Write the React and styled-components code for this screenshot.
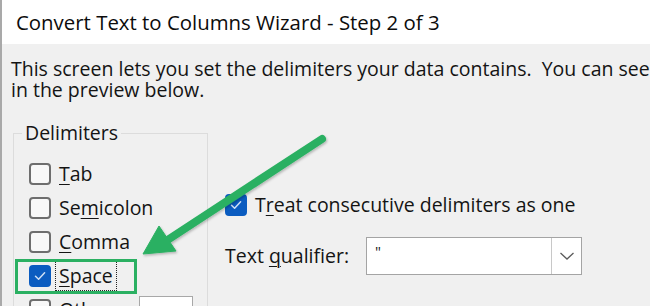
import React from 'react';
import styled, { createGlobalStyle } from 'styled-components';

const Global = createGlobalStyle`
  html, body { margin: 0; padding: 0; background: #f0f0f0; }
  body {
    font-family: "Open Sans", "Noto Sans", sans-serif;
    color: #141414;
  }
`;

const Window = styled.div`
  position: relative;
  width: 650px;
  height: 306px;
  overflow: hidden;
`;

const Dialog = styled.div`
  box-sizing: border-box;
  width: 650px;
  height: 306px;
  border-left: 2px solid #a9a9a9;
  background: #f0f0f0;
  display: flex;
  flex-direction: column;
`;

const TitleBar = styled.div`
  flex: none;
  height: 44px;
  background: #ffffff;
  display: flex;
  align-items: center;
  padding-left: 14px;
  font-size: 20.4px;
  color: #0c0c0c;
  white-space: nowrap;
`;

const Body = styled.div`
  padding: 14px 0 0 9px;
  display: flex;
  flex-direction: column;
`;

const Description = styled.p`
  margin: 0;
  font-size: 19.5px;
  line-height: 21px;
  white-space: nowrap;
`;

const Columns = styled.div`
  display: flex;
  align-items: flex-start;
  margin-top: 22px;
`;

const GroupBox = styled.fieldset`
  box-sizing: border-box;
  margin: 0 0 0 2px;
  width: 195px;
  height: 220px;
  border: 1px solid #dcdcdc;
  padding: 0 0 0 8px;
`;

const Legend = styled.legend`
  padding: 0 3px;
  font-size: 19.5px;
  line-height: 22px;
`;

const OptionList = styled.div`
  display: flex;
  flex-direction: column;
  padding: 13px 0 0 7px;
`;

const OptionRow = styled.div`
  display: flex;
  align-items: center;
  height: 34px;
  gap: 5px;
  flex: none;
`;

const Box = styled.span`
  box-sizing: border-box;
  flex: none;
  width: 22px;
  height: 22px;
  border-radius: 4px;
  border: ${p => (p.$checked ? '2px solid #0b5cc0' : '2px solid #6e6e6e')};
  background: ${p => (p.$checked ? '#0b5cc0' : '#f8f8f8')};
  display: flex;
  align-items: center;
  justify-content: center;
`;

const Label = styled.span`
  font-size: 19.5px;
  line-height: 28px;
  padding: 0 3px;
  white-space: nowrap;
  outline: ${p => (p.$focused ? '1px dotted #222' : 'none')};
`;

const Key = styled.span`
  text-decoration: underline;
  text-underline-offset: 3px;
  text-decoration-thickness: 1px;
`;

const SmallInput = styled.span`
  display: block;
  box-sizing: border-box;
  width: 54px;
  height: 28px;
  margin-left: 14px;
  background: #fff;
  border: 1px solid #a8a8a8;
  border-bottom-color: #8a8a8a;
`;

const RightPanel = styled.div`
  display: flex;
  flex-direction: column;
  padding: 66px 0 0 17px;
`;

const QualifierRow = styled.div`
  display: flex;
  align-items: center;
  gap: 17px;
  margin-top: 15px;
`;

const PlainLabel = styled.span`
  font-size: 19.5px;
  line-height: 26px;
  white-space: nowrap;
`;

const Combo = styled.div`
  box-sizing: border-box;
  width: 216px;
  height: 38px;
  background: #fff;
  border: 1px solid #a4a4a4;
  display: flex;
`;

const ComboValue = styled.span`
  flex: 1;
  padding: 6px 0 0 8px;
  font-size: 15px;
  line-height: 15px;
  color: #222;
`;

const ComboButton = styled.span`
  flex: none;
  width: 29px;
  border-left: 1px solid #c8c8c8;
  display: flex;
  align-items: center;
  justify-content: center;
`;

const Highlight = styled.div`
  position: absolute;
  left: 15px;
  top: 259px;
  width: 122px;
  height: 35px;
  box-sizing: border-box;
  border: 3px solid #2bb062;
  pointer-events: none;
`;

const ArrowLayer = styled.svg`
  position: absolute;
  left: 0;
  top: 0;
  pointer-events: none;
`;

const Check = () => (
  <svg width="14" height="14" viewBox="0 0 14 14">
    <path d="M2.5 7.2 L5.6 10.2 L11.6 3.8" fill="none" stroke="#cfe0f5" strokeWidth="1.5" strokeLinecap="round" strokeLinejoin="round" />
  </svg>
);

const Chevron = () => (
  <svg width="16" height="10" viewBox="0 0 16 10">
    <path d="M1.5 2 L8 8 L14.5 2" fill="none" stroke="#5a5a5a" strokeWidth="1.3" />
  </svg>
);

const Option = ({ checked, focused, children }) => (
  <OptionRow>
    <Box $checked={checked}>{checked && <Check />}</Box>
    <Label $focused={focused}>{children}</Label>
  </OptionRow>
);

export default function App() {
  return (
    <>
      <Global />
      <Window>
        <Dialog>
          <TitleBar>Convert Text to Columns Wizard - Step 2 of 3</TitleBar>
          <Body>
            <Description>
              This screen lets you set the delimiters your data contains.&nbsp; You can see how your text is affected
              <br />
              in the preview below.
            </Description>
            <Columns>
              <GroupBox>
                <Legend>Delimiters</Legend>
                <OptionList>
                  <Option><Key>T</Key>ab</Option>
                  <Option>Se<Key>m</Key>icolon</Option>
                  <Option><Key>C</Key>omma</Option>
                  <Option checked focused><Key>S</Key>pace</Option>
                  <OptionRow>
                    <Box />
                    <Label><Key>O</Key>ther:</Label>
                    <SmallInput />
                  </OptionRow>
                </OptionList>
              </GroupBox>
              <RightPanel>
                <Option checked>T<Key>r</Key>eat consecutive delimiters as one</Option>
                <QualifierRow>
                  <PlainLabel>Text <Key>q</Key>ualifier:</PlainLabel>
                  <Combo>
                    <ComboValue>"</ComboValue>
                    <ComboButton><Chevron /></ComboButton>
                  </Combo>
                </QualifierRow>
              </RightPanel>
            </Columns>
          </Body>
        </Dialog>
        <Highlight />
        <ArrowLayer width="650" height="306" viewBox="0 0 650 306">
          <defs>
            <filter id="sh" x="-20%" y="-20%" width="140%" height="140%">
              <feDropShadow dx="1" dy="1.5" stdDeviation="1.2" floodColor="#000" floodOpacity="0.25" />
            </filter>
          </defs>
          <g filter="url(#sh)" fill="#2bb062" stroke="#2bb062">
            <line x1="322" y1="139" x2="166" y2="241" strokeWidth="8" strokeLinecap="round" />
            <polygon points="143,254 159,226 176,251" strokeWidth="1" strokeLinejoin="round" />
          </g>
        </ArrowLayer>
      </Window>
    </>
  );
}
